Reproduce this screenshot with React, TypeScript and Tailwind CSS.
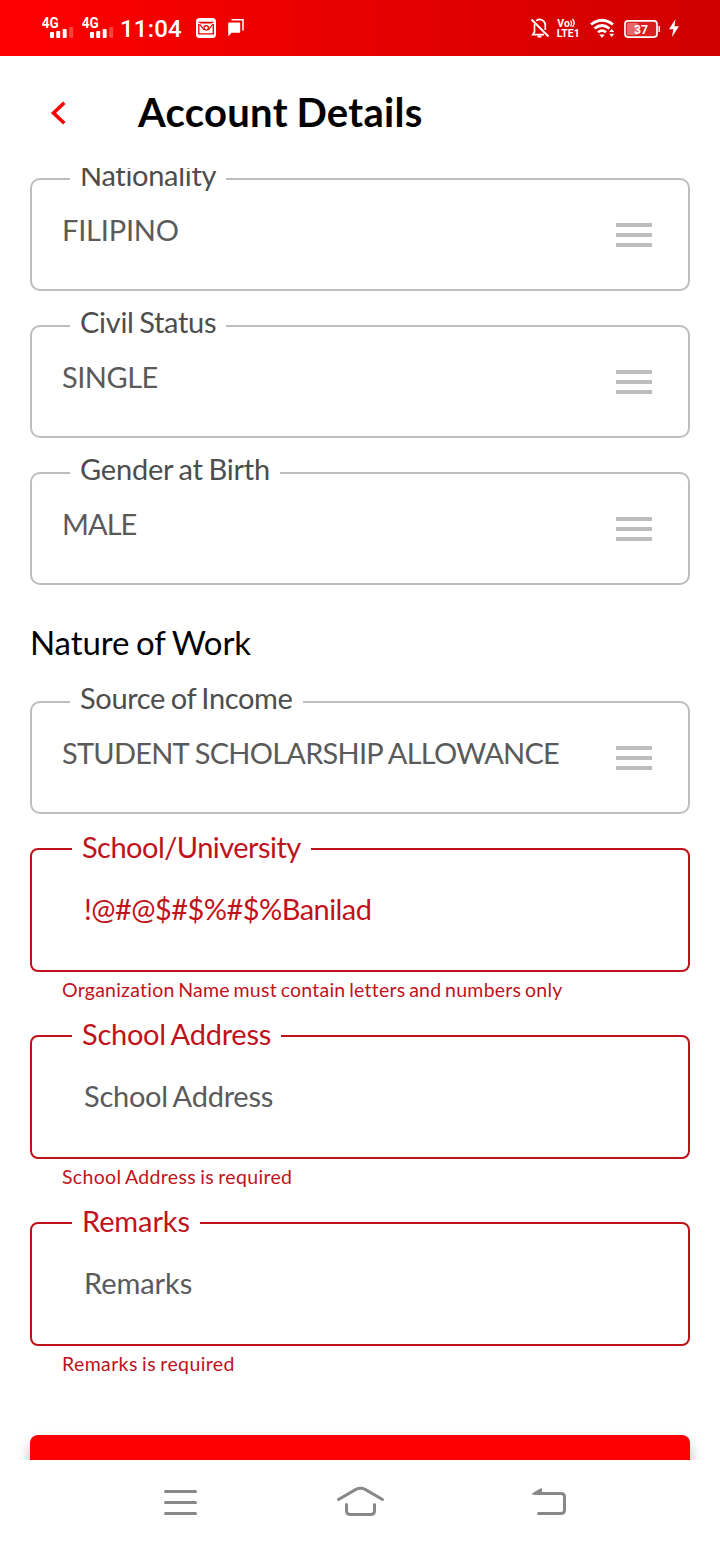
import React from "react";

function Signal({ className }: { className: string }) {
  return (
    <svg className={className} width="34" height="26" viewBox="0 0 34 26" fill="#fff">
      <text x="-0.3" y="13" fontSize="14" fontWeight="700" fontFamily="Roboto, sans-serif" textLength="17" lengthAdjust="spacingAndGlyphs">4G</text>
      <rect x="8" y="17" width="4" height="6" rx="1" />
      <rect x="14.2" y="16" width="4" height="7" rx="1" />
      <rect x="20.7" y="14" width="4" height="9" rx="1" />
      <rect x="27.2" y="12" width="4" height="11" rx="1" opacity="0.25" />
    </svg>
  );
}

function StatusBar() {
  return (
    <header className="flex h-14 shrink-0 items-start justify-between bg-linear-to-r from-[#ff0000] to-[#cf0000] pt-[15px] pr-[38px] pl-[42px] text-white">
      <div className="flex items-start">
        <Signal className="mr-1.5" />
        <Signal className="mr-1" />
        <span className="w-[63px] whitespace-nowrap font-[Roboto,sans-serif] text-2xl leading-[29px] font-medium tracking-[0.2px]">11:04</span>
        <svg className="ml-[12px]" width="22" height="26" viewBox="195 15 22 26" fill="none">
          <rect x="196" y="18" width="20" height="20" rx="3.5" fill="#fff" />
          <g stroke="#e80000">
            <path d="M198.800 24v9.800h14.500V24" strokeWidth="1.300" />
            <path d="M198.300 22h15.500l-2.600 1.300h-10.300Z" fill="#e80000" strokeWidth="0.500" />
            <path d="M199.500 24l4.200 5.300h5l4.200-5.300" strokeWidth="1.200" />
            <circle cx="206.200" cy="27.800" r="2.200" fill="#fff" strokeWidth="1.200" />
          </g>
        </svg>
        <svg className="ml-[10px]" width="20" height="26" viewBox="227 15 20 26">
          <path d="M229.200 22.500h10q1 0 1 1v8.300q0 1-1 1h-7.700l-2.300 2.600q-1 .8-1-.6V23.500q0-1 1-1Z" fill="#fff" />
          <path d="M231.500 19.800h11.500v10.600" stroke="#fff" strokeWidth="1.500" fill="none" />
        </svg>
      </div>
      <div className="flex items-start">
        <svg width="22" height="26" viewBox="530 15 22 26" fill="none" stroke="#fff" strokeWidth="1.700">
          <path d="M531.500 19.500l17 17" strokeWidth="1.900" />
          <path d="M534.500 24v8l-1.800 2.700h11.300M536.300 20.700q2-1.300 3.200-1.300 5.500.6 5.800 6v4.600" />
          <path d="M537.500 36.500h4" strokeWidth="2" />
        </svg>
        <svg className="ml-1" width="26" height="26" viewBox="556 15 26 26" fill="#fff">
          <text x="557.300" y="27.300" fontSize="11.500" fontWeight="700" fontFamily="Roboto, sans-serif" textLength="12.500" lengthAdjust="spacingAndGlyphs">Vo</text>
          <text x="556.800" y="37" fontSize="11.500" fontWeight="700" fontFamily="Roboto, sans-serif" textLength="23" lengthAdjust="spacingAndGlyphs">LTE1</text>
          <path d="M570.500 20.700q2.200 2.700 0 5.800M572.500 19q3.300 4 0 8" fill="none" stroke="#fff" strokeWidth="1.300" />
        </svg>
        <svg className="ml-[7px]" width="28" height="26" viewBox="589 15 28 26" fill="none" stroke="#fff" strokeWidth="2.700">
          <path d="M591 24.500q11-8.500 22 0M594.500 28.500q7.500-6 15 0M598 32.300q4-3.500 8 0" />
          <path d="M599.200 34.500h5.600l-2.800 3.200Z" fill="#fff" stroke="none" />
          <path d="M609.200 32l2.500-3.300 2.500 3.300ZM609.200 33.800l2.500 3.300 2.500-3.300Z" fill="#fff" stroke="none" />
        </svg>
        <svg className="ml-[6px]" width="38" height="26" viewBox="623 15 38 26">
          <rect x="625" y="20.900" width="32" height="16.200" rx="3" fill="#fff" fillOpacity="0.120" stroke="#fff" strokeWidth="1.700" />
          <rect x="627" y="23" width="11" height="12" rx="1" fill="#fff" opacity="0.330" />
          <path d="M659.200 26v6" stroke="#fff" strokeWidth="1.400" />
          <text x="634" y="34" fontSize="12.500" fontWeight="700" fill="#fff" fontFamily="Roboto, sans-serif" textLength="14" lengthAdjust="spacingAndGlyphs">37</text>
        </svg>
        <svg className="ml-[7px]" width="14" height="26" viewBox="668 15 14 26" fill="#fff">
          <path d="M675.500 19l-6.500 10.300h4.300l-1.300 7.700 7-10.700h-4.500Z" />
        </svg>
      </div>
    </header>
  );
}

function MenuIcon() {
  return (
    <div className="flex w-9 shrink-0 flex-col gap-1.5">
      <span className="h-1 bg-[#bdbdbd]" />
      <span className="h-1 bg-[#bdbdbd]" />
      <span className="h-1 bg-[#bdbdbd]" />
    </div>
  );
}

type SelectProps = { label: string; labelClass: string; value: string; valueClass: string };

function SelectField({ label, labelClass, value, valueClass }: SelectProps) {
  return (
    <fieldset className="h-[129px] rounded-[10px] border-2 border-[#bdbdbd] pr-9 pl-[30px]">
      <legend className={`ml-2 h-[34px] px-2.5 text-[29px] leading-[26px] whitespace-nowrap text-[#4d4d4d] ${labelClass}`}>{label}</legend>
      <div className="flex items-center justify-between pt-[27px]">
        <span className={`-mt-[11px] whitespace-nowrap text-[29px] leading-[32px] text-[#5a5a5a] ${valueClass}`}>{value}</span>
        <MenuIcon />
      </div>
    </fieldset>
  );
}

type InputProps = { label: string; labelClass: string; value: string; valueClass: string; error: string; errorClass: string };

function InputField({ label, labelClass, value, valueClass, error, errorClass }: InputProps) {
  return (
    <div className="h-[187px]">
      <fieldset className="h-[140px] rounded-[8px] border-2 border-[#c0121a] pl-[52px]">
        <legend className={`-ml-3 h-[34px] px-2.5 text-[29px] leading-[30px] whitespace-nowrap text-[#c0121a] ${labelClass}`}>{label}</legend>
        <div className={`pt-[27px] text-[29px] leading-[32px] ${valueClass}`}>{value}</div>
      </fieldset>
      <p className={`pt-1.5 pl-8 text-[19.500px] leading-6 whitespace-nowrap text-[#c0121a] ${errorClass}`}>{error}</p>
    </div>
  );
}

function NavigationBar() {
  return (
    <nav className="flex h-[84px] shrink-0 items-center justify-between bg-white px-[155px]">
      <svg width="51" height="40" viewBox="155 1482 51 40" fill="none" stroke="#888" strokeWidth="3" strokeLinecap="round">
        <path d="M165.500 1491.500h30M165.500 1502.500h30M165.500 1513.500h30" />
      </svg>
      <svg width="51" height="40" viewBox="335 1482 51 40" fill="none" stroke="#888" strokeWidth="3" strokeLinecap="round">
        <path d="M338.500 1499.500l17-9.900q5-2.500 10 0l17 9.900M346.500 1504.500v6q0 4 4 4h20q4 0 4-4v-6" />
      </svg>
      <svg width="51" height="40" viewBox="514 1482 51 40" className="overflow-visible" fill="none" stroke="#888" strokeWidth="3" strokeLinecap="round">
        <path d="M535 1493.500h26q3.500 0 3.500 3.500v13q0 3.500-3.500 3.500h-22.500" />
        <path d="M532 1494.500q-.2-1 .8-1.600l7.500-4.400q1.700-.7 1.700 1v5Z" fill="#888" stroke="none" />
      </svg>
    </nav>
  );
}

export default function App() {
  return (
    <div className="flex h-[1544px] w-[720px] flex-col overflow-hidden bg-white font-[Lato,sans-serif] [font-variant-ligatures:none]">
      <StatusBar />
      <div className="flex h-28 shrink-0 items-center pl-[48px]">
        <svg width="20" height="28" viewBox="48 98 20 28" fill="none" stroke="#f00" strokeWidth="3.600">
          <path d="M64.300 102.800L53.500 113l10.800 10.200" />
        </svg>
        <h1 className="ml-[70px] text-[40px] leading-[48px] font-bold tracking-[0.3px] whitespace-nowrap text-black [word-spacing:-1.5px]">Account Details</h1>
      </div>
      <main className="flex min-h-0 grow flex-col overflow-hidden px-[30px]">
        <div className="-mt-1.5 flex shrink-0 flex-col gap-[18px]">
          <SelectField label="Nationality" labelClass="tracking-[-0.3px]" value="FILIPINO" valueClass="tracking-[-0.2px]" />
          <SelectField label="Civil Status" labelClass="tracking-[-0.3px] [word-spacing:-1.5px]" value="SINGLE" valueClass="tracking-[-0.5px]" />
          <SelectField label="Gender at Birth" labelClass="tracking-[-0.2px] [word-spacing:-1.5px]" value="MALE" valueClass="tracking-[-0.95px]" />
        </div>
        <h2 className="h-[100px] shrink-0 pt-[37px] text-[33px] leading-[40px] tracking-[-0.1px] text-black [word-spacing:-1.5px]">Nature of Work</h2>
        <div className="shrink-0">
          <SelectField label="Source of Income" labelClass="tracking-[-0.34px] [word-spacing:-1.5px]" value="STUDENT SCHOLARSHIP ALLOWANCE" valueClass="tracking-[-0.76px]" />
        </div>
        <div className="mt-[18px] shrink-0">
          <InputField label="School/University" labelClass="tracking-[-0.53px]" value="!@#@$#$%#$%Banilad" valueClass="tracking-[-0.55px] text-[#c0121a]" error="Organization Name must contain letters and numbers only" errorClass="tracking-[0.24px] [word-spacing:-1.5px]" />
          <InputField label="School Address" labelClass="tracking-[-0.25px] [word-spacing:-1.5px]" value="School Address" valueClass="tracking-[-0.25px] text-[#5a5a5a] [word-spacing:-1.5px]" error="School Address is required" errorClass="tracking-[0.32px] [word-spacing:-1px]" />
          <InputField label="Remarks" labelClass="tracking-[-0.1px]" value="Remarks" valueClass="tracking-[-0.05px] text-[#5a5a5a]" error="Remarks is required" errorClass="tracking-[0.38px] [word-spacing:-1px]" />
        </div>
        <button aria-label="Submit" className="mt-[42px] h-24 shrink-0 rounded-[8px] bg-[#ff0000] shadow-[0_9px_14px_rgba(0,0,0,0.280)]" />
      </main>
      <NavigationBar />
    </div>
  );
}
